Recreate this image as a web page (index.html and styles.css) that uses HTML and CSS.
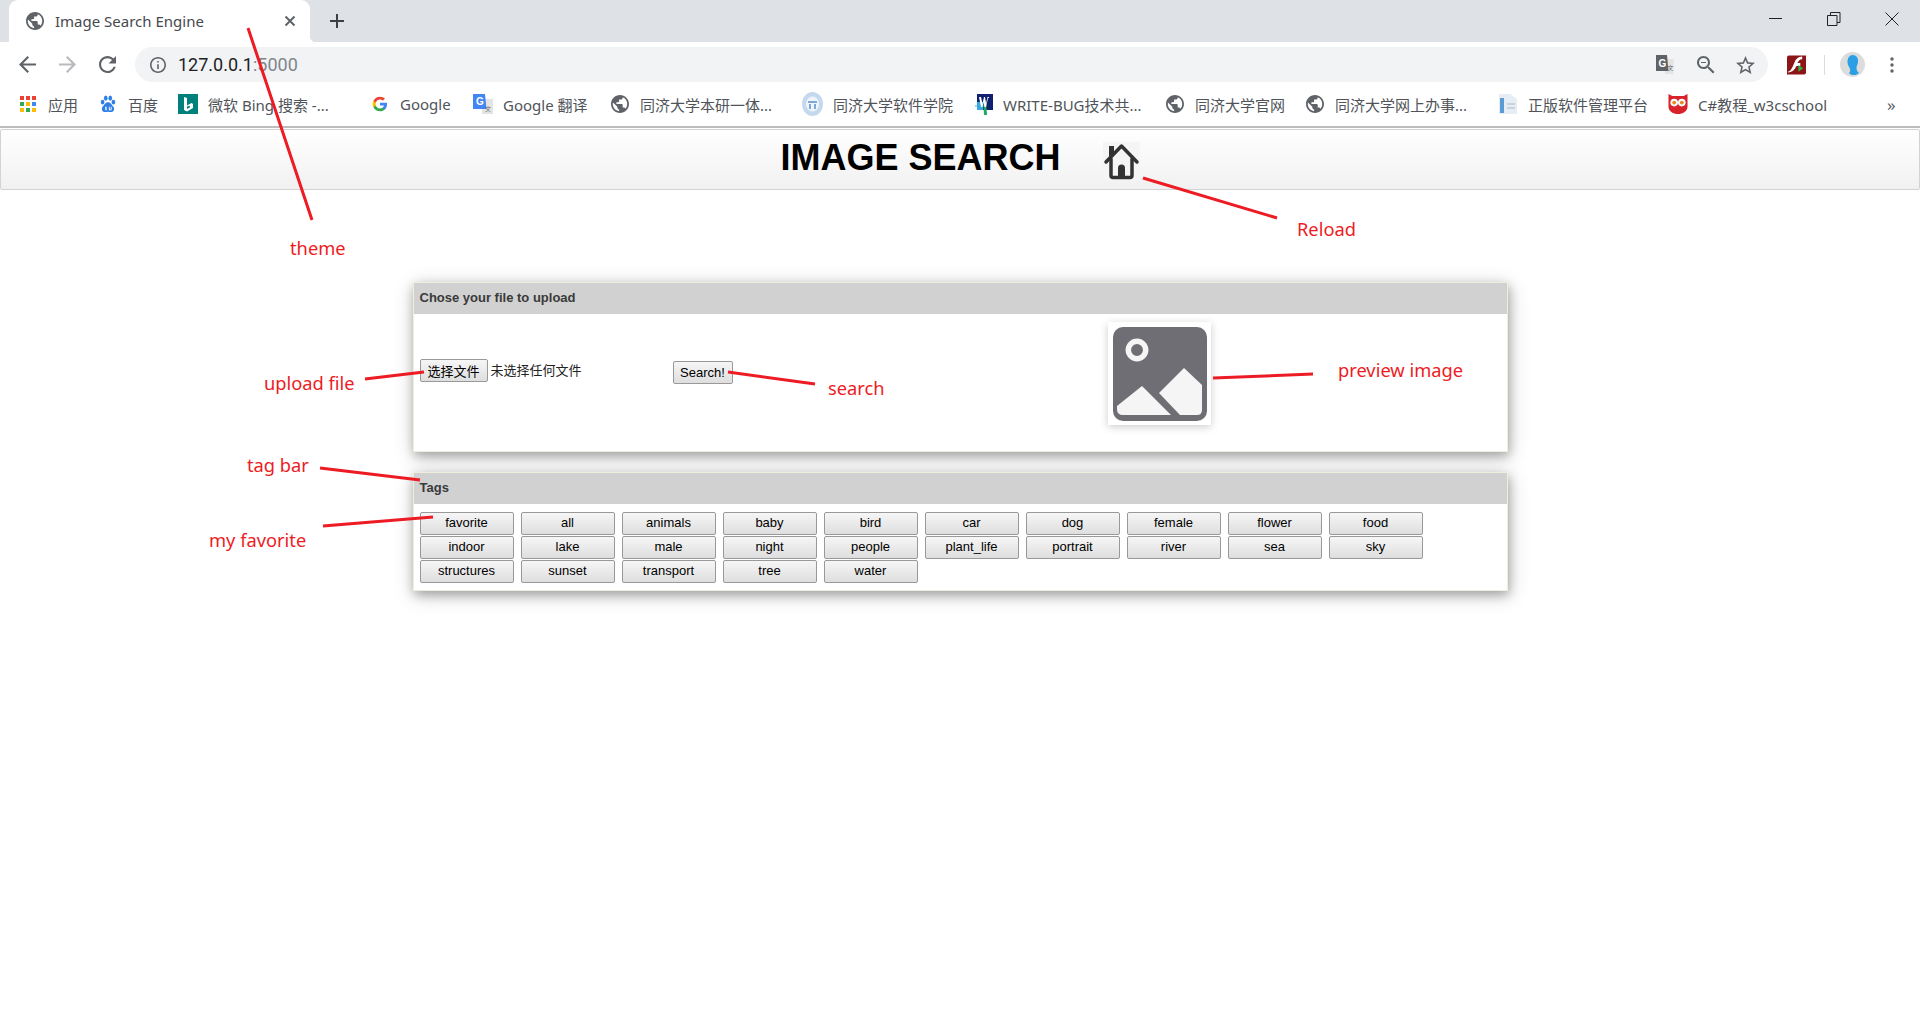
FILE: index.html
```html
<!DOCTYPE html>
<html lang="en">
<head>
    <meta charset="UTF-8">
    <title>Image Search Engine</title>
    <link rel="stylesheet" href="styles.css">
</head>
<body>
<svg class="sprite" width="0" height="0">
    <symbol id="globe" viewBox="2 2 20 20">
        <path d="M12 2C6.48 2 2 6.48 2 12s4.48 10 10 10 10-4.48 10-10S17.52 2 12 2zm-1 17.93c-3.95-.49-7-3.85-7-7.93 0-.62.08-1.21.21-1.79L9 15v1c0 1.1.9 2 2 2v1.93zm6.9-2.54c-.26-.81-1-1.39-1.9-1.39h-1v-3c0-.55-.45-1-1-1H8v-2h2c.55 0 1-.45 1-1V7h2c1.1 0 2-.9 2-2v-.41c2.93 1.19 5 4.06 5 7.41 0 2.08-.8 3.97-2.1 5.39z"/>
    </symbol>
</svg>

<!-- browser window -->
<div class="tabstrip">
    <div class="tab">
        <svg class="tab-icon"><use href="#globe"/></svg>
        <span class="tab-title">Image Search Engine</span>
        <svg class="tab-close" viewBox="0 0 12 12"><path d="M1.5 1.5l9 9M10.5 1.5l-9 9"/></svg>
    </div>
    <svg class="new-tab" viewBox="0 0 16 16"><path d="M8 1v14M1 8h14"/></svg>
    <div class="window-controls">
        <svg viewBox="0 0 14 14"><path d="M0 6.5h13"/></svg>
        <svg viewBox="0 0 14 14"><path d="M.5 3.5h9.5v10H.5zM3.5 3.500V.5h9.500v10H10"/></svg>
        <svg viewBox="0 0 14 14"><path d="M.5.5l13 13M13.500.5l-13 13"/></svg>
    </div>
</div>

<div class="toolbar">
    <svg class="nav-icon" viewBox="4 4 16 16"><path d="M20 11H7.830l5.590-5.590L12 4l-8 8 8 8 1.410-1.410L7.830 13H20v-2z"/></svg>
    <svg class="nav-icon nav-off" viewBox="4 4 16 16"><path d="M4 11h12.170l-5.590-5.590L12 4l8 8-8 8-1.410-1.410L16.170 13H4v-2z"/></svg>
    <svg class="nav-icon" viewBox="4 4 16 16"><path d="M17.650 6.350C16.200 4.900 14.210 4 12 4c-4.420 0-7.990 3.580-7.990 8s3.570 8 7.990 8c3.730 0 6.840-2.550 7.730-6h-2.080c-.82 2.330-3.040 4-5.650 4-3.310 0-6-2.690-6-6s2.690-6 6-6c1.660 0 3.140.69 4.220 1.780L13 11h7V4l-2.350 2.350z"/></svg>
    <div class="omnibox">
        <svg class="info-icon" viewBox="2 2 20 20"><path d="M11 7h2v2h-2zm0 4h2v6h-2zm1-9C6.480 2 2 6.480 2 12s4.480 10 10 10 10-4.480 10-10S17.520 2 12 2zm0 18c-4.410 0-8-3.590-8-8s3.590-8 8-8 8 3.590 8 8-3.590 8-8 8z"/></svg>
        <span class="url">127.0.0.1<span class="url-port">:5000</span></span>
        <svg class="omni-icon translate-icon" viewBox="0 0 18 20">
            <path class="tr-back" d="M7 4h10.500v15H9z"/>
            <path class="tr-front" d="M0 0h11l1.500 16H0z"/>
            <text x="2.500" y="12" class="tr-g">G</text>
            <text x="11.500" y="15" class="tr-x">文</text>
        </svg>
        <svg class="omni-icon zoom-icon" viewBox="3 3 18 18"><path d="M15.500 14h-.79l-.28-.27C15.410 12.590 16 11.110 16 9.500 16 5.910 13.090 3 9.500 3S3 5.910 3 9.500 5.910 16 9.500 16c1.610 0 3.090-.59 4.230-1.570l.27.28v.79l5 4.990L20.490 19l-4.990-5zm-6 0C7.010 14 5 11.990 5 9.500S7.010 5 9.500 5 14 7.010 14 9.500 11.990 14 9.500 14zM7 9h5v1H7z"/></svg>
        <svg class="omni-icon star-icon" viewBox="2 2 20 19"><path d="M22 9.240l-7.190-.62L12 2 9.190 8.630 2 9.240l5.460 4.730L5.820 21 12 17.270 18.180 21l-1.630-7.030L22 9.240zM12 15.400l-3.760 2.270 1-4.280-3.320-2.880 4.380-.38L12 6.100l1.710 4.040 4.380.38-3.320 2.880 1 4.280L12 15.400z"/></svg>
    </div>
    <svg class="pdf-icon" viewBox="0 0 20 20">
        <path fill="#8c1515" d="M2 0h18v18a2 2 0 0 1-2 2H0V2a2 2 0 0 1 2-2z"/>
        <path fill="#fff" d="M1 17c4-1 5-6 7-10 1-3 4-6 8-6v3c-3 0-4 2-5 4h3v3h-4c-2 4-4 6-9 7z"/>
        <path fill="#2db34a" d="M12 10l5 3.500-5 3.500z"/>
    </svg>
    <span class="toolbar-sep"></span>
    <svg class="avatar" viewBox="0 0 25 25">
        <ellipse cx="12.500" cy="12.500" rx="12.500" ry="12.500" fill="#dcdcdc"/>
        <path fill="#2b9fe6" d="M12.500 3c4 0 6 3 5.500 7-.3 2.500-1.500 4-1.500 6 0 3 1.500 4 2.500 5-2 2.500-8 3-10 0 1-1 1.500-2 1-4-.5-1.500-2.500-4-2.500-7 0-4 2-7 5-7z"/>
    </svg>
    <svg class="menu-icon" viewBox="0 0 4 16"><circle cx="2" cy="2" r="1.700"/><circle cx="2" cy="8" r="1.700"/><circle cx="2" cy="14" r="1.700"/></svg>
</div>

<div class="bookmarks">
    <a class="bookmark">
        <svg class="fav" viewBox="0 0 16 16">
            <rect width="4" height="4" fill="#ea4335"/><rect x="6" width="4" height="4" fill="#ea4335"/><rect x="12" width="4" height="4" fill="#ea4335"/>
            <rect y="6" width="4" height="4" fill="#34a853"/><rect x="6" y="6" width="4" height="4" fill="#fbbc05"/><rect x="12" y="6" width="4" height="4" fill="#4285f4"/>
            <rect y="12" width="4" height="4" fill="#fbbc05"/><rect x="6" y="12" width="4" height="4" fill="#34a853"/><rect x="12" y="12" width="4" height="4" fill="#fbbc05"/>
        </svg>
        <span>应用</span>
    </a>
    <a class="bookmark">
        <svg class="fav" viewBox="0 0 16 20" fill="#2e7fe8">
            <ellipse cx="2" cy="8" rx="2" ry="2.600"/><ellipse cx="5.500" cy="3.500" rx="2" ry="3"/><ellipse cx="10.500" cy="3.500" rx="2" ry="3"/><ellipse cx="14" cy="8" rx="2" ry="2.600"/>
            <path d="M8 8c3 0 4 3 6 5 2 3 0 6-3 6-1 0-2-.5-3-.5s-2 .5-3 .5c-3 0-5-3-3-6 2-2 3-5 6-5z"/>
            <path fill="#fff" d="M5 13h1.500v4H5zM9 13h1v3h1v-3h1v4H9z"/>
        </svg>
        <span>百度</span>
    </a>
    <a class="bookmark">
        <svg class="fav fav-wide" viewBox="0 0 20 20">
            <rect width="20" height="20" fill="#00807a"/>
            <path fill="#fff" d="M6 3l3 1v7.500l4.500-2.500 1.500 1v4l-6 3.500-3-1.500zM9 12.500v2.500l3-1.800-.2-1.500z"/>
        </svg>
        <span class="bookmark-clip">微软 Bing 搜索 -...</span>
    </a>
    <a class="bookmark">
        <svg class="fav" viewBox="0 0 48 48">
            <path fill="#4285F4" d="M45.120 24.500c0-1.560-.14-3.060-.4-4.500H24v8.510h11.840c-.51 2.750-2.060 5.080-4.390 6.640v5.520h7.110c4.160-3.830 6.560-9.470 6.560-16.170z"/>
            <path fill="#34A853" d="M24 46c5.940 0 10.920-1.970 14.560-5.330l-7.110-5.520c-1.970 1.320-4.490 2.100-7.450 2.100-5.730 0-10.580-3.870-12.310-9.070H4.340v5.700C7.960 41.070 15.400 46 24 46z"/>
            <path fill="#FBBC05" d="M11.690 28.180C11.250 26.860 11 25.450 11 24s.25-2.860.69-4.180v-5.700H4.340C2.850 17.090 2 20.450 2 24c0 3.550.85 6.910 2.340 9.880l7.350-5.700z"/>
            <path fill="#EA4335" d="M24 10.750c3.230 0 6.130 1.110 8.410 3.290l6.310-6.310C34.910 4.180 29.930 2 24 2 15.400 2 7.960 6.930 4.340 14.120l7.350 5.700c1.730-5.200 6.580-9.070 12.310-9.070z"/>
        </svg>
        <span>Google</span>
    </a>
    <a class="bookmark">
        <svg class="fav fav-wide" viewBox="0 0 20 20">
            <path fill="#e4e4e4" d="M8 5h12v15H9z"/>
            <path fill="#4285f4" d="M0 0h12l1.500 15H0z"/>
            <text x="3" y="11" class="tr-g">G</text>
            <text x="12" y="17" class="tr-x">文</text>
        </svg>
        <span>Google 翻译</span>
    </a>
    <a class="bookmark">
        <svg class="fav fav-globe"><use href="#globe"/></svg>
        <span>同济大学本研一体...</span>
    </a>
    <a class="bookmark">
        <svg class="fav fav-seal" viewBox="0 0 21 24">
            <ellipse cx="10.500" cy="12" rx="10.500" ry="12" fill="#c5d9ee"/>
            <ellipse cx="10.500" cy="12" rx="6.500" ry="7.500" fill="#eef4fa"/>
            <path fill="#7ea7d2" d="M6 9h9v2H6zM7 12h2v5H7zM12 12h2v5h-2z"/>
        </svg>
        <span>同济大学软件学院</span>
    </a>
    <a class="bookmark">
        <svg class="fav fav-wb" viewBox="0 0 18 21">
            <rect x="2" width="16" height="16" fill="#101f70"/>
            <rect x="2" y="8" width="6" height="8" fill="#3aa7e0"/>
            <path fill="#22a860" d="M8 6h3l1 15H9z"/>
            <path fill="#fff" d="M4 3l2 0 1.500 7L9 3h1l1 7 1.500-7H14v1h-1l-2 9H9.500L8.500 8l-1 5H6z"/>
            <circle cx="1" cy="12" r="1" fill="#7fd0ef"/>
        </svg>
        <span>WRITE-BUG技术共...</span>
    </a>
    <a class="bookmark">
        <svg class="fav fav-globe"><use href="#globe"/></svg>
        <span>同济大学官网</span>
    </a>
    <a class="bookmark">
        <svg class="fav fav-globe"><use href="#globe"/></svg>
        <span>同济大学网上办事...</span>
    </a>
    <a class="bookmark">
        <svg class="fav fav-wide" viewBox="0 0 20 20">
            <path fill="#e6edf5" d="M1 0h11l7 5v15H1z"/>
            <rect x="2" y="4" width="4" height="15" fill="#5b9bd5"/>
            <path fill="#c9d3dd" d="M9 9h8v2H9zM9 13h8v2H9z"/>
        </svg>
        <span>正版软件管理平台</span>
    </a>
    <a class="bookmark">
        <svg class="fav fav-wide" viewBox="0 0 20 21">
            <path fill="#d8232a" d="M0 0l4 2h12l4-2v13c0 5-5 8-10 8S0 18 0 13z"/>
            <circle cx="6" cy="9" r="4" fill="#fff"/><circle cx="14" cy="9" r="4" fill="#fff"/>
            <circle cx="6" cy="9" r="2" fill="#e58a1f"/><circle cx="14" cy="9" r="2" fill="#e58a1f"/>
        </svg>
        <span>C#教程_w3cschool</span>
    </a>
    <span class="bookmark-more">»</span>
</div>

<!-- page -->
<header class="page-header">
    <h1 class="page-title">IMAGE SEARCH</h1>
    <button class="home-btn">
        <svg viewBox="0 0 37 38">
            <path class="home-roof" d="M3 20L18.500 4 34 20"/>
            <path class="home-wall" d="M8 17v16.500q0 2 2 2h17q2 0 2-2V17"/>
            <path class="home-door" d="M15 36V26q0-3.500 3.500-3.500T22 26v10z"/>
            <path class="home-door" d="M6 4h5v6l-5 5z"/>
        </svg>
    </button>
</header>

<main class="content">
    <section class="panel">
        <h2 class="panel-title">Chose your file to upload</h2>
        <div class="upload-body">
            <div class="file-field">
                <button class="file-btn">选择文件</button>
                <span class="file-name">未选择任何文件</span>
            </div>
            <button class="search-btn">Search!</button>
            <div class="preview">
                <svg viewBox="0 0 94 94">
                    <rect width="94" height="94" rx="10" fill="#6f6e75"/>
                    <circle cx="24" cy="23" r="8.700" fill="none" stroke="#f5f5f5" stroke-width="5.500"/>
                    <path fill="#f5f5f5" d="M71 41l18 17v25q0 5-5 5H67L46 66z"/>
                    <path fill="#f5f5f5" d="M29 59l29 29H10q-6 0-6-6v-3z"/>
                </svg>
            </div>
        </div>
    </section>

    <section class="panel">
        <h2 class="panel-title">Tags</h2>
        <div class="tag-grid">
            <button class="tag">favorite</button>
            <button class="tag">all</button>
            <button class="tag">animals</button>
            <button class="tag">baby</button>
            <button class="tag">bird</button>
            <button class="tag">car</button>
            <button class="tag">dog</button>
            <button class="tag">female</button>
            <button class="tag">flower</button>
            <button class="tag">food</button>
            <button class="tag">indoor</button>
            <button class="tag">lake</button>
            <button class="tag">male</button>
            <button class="tag">night</button>
            <button class="tag">people</button>
            <button class="tag">plant_life</button>
            <button class="tag">portrait</button>
            <button class="tag">river</button>
            <button class="tag">sea</button>
            <button class="tag">sky</button>
            <button class="tag">structures</button>
            <button class="tag">sunset</button>
            <button class="tag">transport</button>
            <button class="tag">tree</button>
            <button class="tag">water</button>
        </div>
    </section>
</main>

<!-- red notes drawn on top of the screenshot -->
<svg class="notes-lines" viewBox="0 0 1920 1030">
    <path d="M248 28L312 220"/>
    <path d="M1143 178L1277 218"/>
    <path d="M365 379L424 372"/>
    <path d="M728 372L815 384"/>
    <path d="M1213 378L1313 374"/>
    <path d="M320 468L420 480"/>
    <path d="M323 526L433 517"/>
</svg>
<span class="note note-theme">theme</span>
<span class="note note-reload">Reload</span>
<span class="note note-upload">upload file</span>
<span class="note note-search">search</span>
<span class="note note-preview">preview image</span>
<span class="note note-tagbar">tag bar</span>
<span class="note note-favorite">my favorite</span>
</body>
</html>
```

FILE: styles.css
```css
* {
    box-sizing: border-box;
}

body {
    margin: 0;
    height: 1030px;
    overflow: hidden;
    position: relative;
    background: #fff;
    font-family: "Liberation Sans", Arial, sans-serif;
}

.sprite {
    position: absolute;
}

/* tab strip */
.tabstrip {
    height: 42px;
    background: #dee1e6;
    display: flex;
    align-items: center;
    padding-left: 9px;
}

.tab {
    width: 301px;
    height: 42px;
    background: #fff;
    border-radius: 9px 9px 0 0;
    display: flex;
    align-items: center;
    padding: 0 14px 0 17px;
    position: relative;
    font-family: "Noto Sans", sans-serif;
}

.tab::after {
    content: "";
    position: absolute;
    right: -6px;
    bottom: 0;
    width: 6px;
    height: 6px;
    background: radial-gradient(circle at 100% 0, transparent 6px, #fff 6.5px);
}

.tab-icon {
    width: 18px;
    height: 18px;
    fill: #5f6368;
    margin-top: -1px;
}

.tab-title {
    margin-left: 11px;
    flex: 1;
    font-size: 15px;
    color: #46494e;
}

.tab-close {
    width: 12px;
    height: 12px;
    fill: none;
    stroke: #5f6368;
    stroke-width: 2;
}

.new-tab {
    width: 16px;
    height: 16px;
    margin-left: 19px;
    fill: none;
    stroke: #3c4043;
    stroke-width: 2;
}

.window-controls {
    margin-left: auto;
    display: flex;
    gap: 44px;
    padding: 0 21px 4px 0;
}

.window-controls svg {
    width: 14px;
    height: 14px;
    fill: none;
    stroke: #222;
    stroke-width: 1;
}

/* address bar */
.toolbar {
    height: 40px;
    display: flex;
    align-items: center;
    padding-left: 19px;
    background: #fff;
}

.nav-icon {
    width: 17px;
    height: 17px;
    margin-right: 23px;
    fill: #5f6368;
}

.nav-off {
    fill: #b8babd;
}

.omnibox {
    width: 1633px;
    height: 35px;
    margin: 5px 0 0 -4px;
    background: #f1f3f4;
    border-radius: 18px;
    display: flex;
    align-items: center;
    padding: 0 13px 0 15px;
}

.toolbar > svg {
    margin-top: 5px;
}

.info-icon {
    width: 16px;
    height: 16px;
    fill: #5f6368;
}

.url {
    margin-left: 12px;
    flex: 1;
    font-family: Roboto, sans-serif;
    font-size: 18px;
    color: #202124;
}

.url-port {
    color: #80868b;
}

.omni-icon {
    fill: #5f6368;
}

.translate-icon {
    width: 18px;
    height: 20px;
}

.zoom-icon {
    width: 18px;
    height: 18px;
    margin-left: 23px;
}

.star-icon {
    width: 19px;
    height: 18px;
    margin-left: 21px;
}

.tr-back {
    fill: #e4e4e4;
}

.tr-front {
    fill: #5f6368;
}

.tr-g {
    font: bold 10px "Liberation Sans", sans-serif;
    fill: #fff;
}

.tr-x {
    font: 6px "Noto Sans CJK SC", sans-serif;
    fill: #5f6368;
}

.pdf-icon {
    width: 19px;
    height: 20px;
    margin-left: 19px;
}

.toolbar-sep {
    width: 1px;
    height: 20px;
    margin: 5px 0 0 18px;
    background: #dadce0;
}

.avatar {
    width: 25px;
    height: 25px;
    margin-left: 15px;
}

.menu-icon {
    width: 4px;
    height: 16px;
    margin-left: 25px;
    fill: #5f6368;
}

/* bookmarks */
.bookmarks {
    height: 46px;
    padding-left: 20px;
    display: grid;
    grid-template-columns: 80px 78px 194px 101px 138px 191px 173px 191px 140px 192px 170px 219px auto;
    align-items: center;
    border-bottom: 2px solid #bdbdbd;
    font-family: "Noto Sans", "Noto Sans CJK SC", sans-serif;
    font-size: 15px;
    color: #50545a;
}

.bookmark {
    display: flex;
    align-items: center;
    gap: 12px;
    white-space: nowrap;
}

.fav {
    width: 16px;
    height: 18px;
    flex: none;
}

.fav-wide {
    width: 20px;
    height: 20px;
    margin-right: -2px;
}

.fav-wb {
    width: 18px;
    height: 21px;
    margin-right: -2px;
}

.fav-globe {
    width: 18px;
    height: 18px;
    fill: #5f6368;
    margin-right: -1px;
}

.fav-seal {
    width: 21px;
    height: 24px;
    margin-right: -2px;
}

.bookmark-more {
    font-size: 17px;
    color: #5f6368;
}

/* page header */
.page-header {
    height: 61px;
    margin-top: 1px;
    border: 1px solid #d3d3d3;
    border-radius: 2px;
    background: linear-gradient(#fff, #f1f1f1);
    display: flex;
    align-items: center;
    justify-content: center;
    gap: 42px;
}

.page-title {
    margin: 0;
    font-size: 36px;
    font-weight: bold;
    color: #000;
    line-height: 1;
    margin-top: -3px;
}

.home-btn {
    width: 37px;
    height: 38px;
    padding: 0;
    border: none;
    background: #f5f5f5;
    margin-top: 3px;
}

.home-btn svg {
    display: block;
    width: 37px;
    height: 38px;
    fill: none;
}

.home-roof,
.home-wall {
    stroke: #333;
    stroke-width: 3.500;
    stroke-linecap: round;
    stroke-linejoin: round;
}

.home-door {
    fill: #333;
}

/* panels */
.content {
    width: 1095px;
    margin: 92px auto 0;
    display: flex;
    flex-direction: column;
    gap: 20px;
}

.panel {
    background: #fff;
    border: 1px solid #eeeedd;
    box-shadow: 1px 4px 10px 0 rgba(0, 0, 0, .27), 1px 4px 20px 0 rgba(0, 0, 0, .19);
}

.panel-title {
    margin: 0;
    height: 31px;
    padding: 0 6px;
    background: #d1d1d1;
    font-size: 13px;
    font-weight: bold;
    line-height: 29px;
    color: #3a3a3a;
}

.upload-body {
    height: 137px;
    padding: 8px 0 0 6px;
    display: flex;
    align-items: flex-start;
}

.file-field {
    width: 253px;
    margin-top: 37px;
    display: flex;
    align-items: center;
    gap: 3px;
    font-family: "Noto Sans CJK SC", sans-serif;
    font-size: 13px;
    color: #222;
}

.file-name {
    margin-top: -2px;
}

.file-btn,
.search-btn {
    height: 23px;
    padding: 0;
    border: 1px solid #999;
    border-radius: 2px;
    background: linear-gradient(#f6f6f6, #dedede);
    color: #000;
}

.file-btn {
    width: 68px;
    font: 13px "Noto Sans CJK SC", sans-serif;
}

.search-btn {
    width: 60px;
    margin-top: 39px;
    font: 13px "Liberation Sans", sans-serif;
}

.preview {
    margin-left: 375px;
    padding: 5px;
    background: #fff;
    box-shadow: 0 2px 8px rgba(0, 0, 0, .2);
    width: 103px;
    height: 103px;
}

.preview svg {
    display: block;
    width: 94px;
    height: 94px;
}

.tag-grid {
    display: grid;
    grid-template-columns: repeat(10, 94px);
    column-gap: 7px;
    row-gap: 1px;
    padding: 8px 0 7px 6px;
}

.tag {
    height: 23px;
    padding: 0 0 2px;
    border: 1px solid #999;
    border-radius: 2px;
    background: linear-gradient(#f6f6f6, #dedede);
    font: 13px "Liberation Sans", sans-serif;
    color: #000;
}

/* notes */
.notes-lines {
    position: absolute;
    left: 0;
    top: 0;
    width: 1920px;
    height: 1030px;
    pointer-events: none;
    fill: none;
    stroke: #ed1c24;
    stroke-width: 3;
}

.note {
    position: absolute;
    font-family: "Noto Sans", sans-serif;
    font-size: 18.300px;
    line-height: 24px;
    color: #ed1c24;
    white-space: nowrap;
}

.note-theme { left: 290px; top: 236px; }
.note-reload { left: 1297px; top: 217px; }
.note-upload { left: 264px; top: 371px; }
.note-search { left: 828px; top: 376px; }
.note-preview { left: 1338px; top: 358px; }
.note-tagbar { left: 247px; top: 453px; }
.note-favorite { left: 209px; top: 528px; }
```
